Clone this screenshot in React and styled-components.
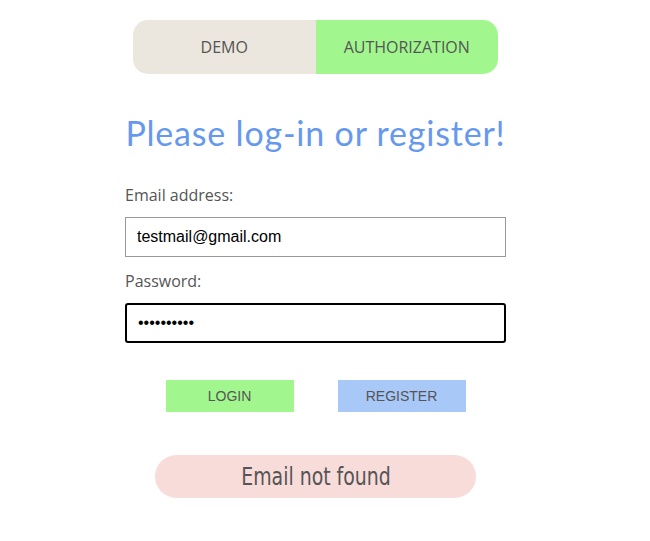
import React, { useState } from 'react';
import styled, { createGlobalStyle } from 'styled-components';

const GlobalStyle = createGlobalStyle`
  body {
    margin: 0;
    background: #fff;
    font-family: "Open Sans", "Noto Sans", sans-serif;
  }
`;

const Page = styled.div`
  width: 631px;
  display: flex;
  flex-direction: column;
  align-items: center;
  padding-top: 20px;
`;

const Tabs = styled.div`
  display: flex;
  width: 365px;
  height: 54px;
  border-radius: 15px;
  overflow: hidden;
`;

const Tab = styled.button`
  flex: 1;
  border: none;
  margin: 0;
  padding: 0;
  font-family: "Open Sans", "Noto Sans", sans-serif;
  font-size: 16px;
  color: #555;
  background: ${(p) => (p.active ? '#a1f78e' : '#ece7de')};
  cursor: pointer;
`;

const Title = styled.h1`
  margin: 38px 0 0;
  font-family: "Lato", sans-serif;
  font-weight: 400;
  font-size: 34px;
  color: #6699ee;
  letter-spacing: 0.8px;
`;

const Form = styled.form`
  width: 381px;
  margin-top: 31px;
  display: flex;
  flex-direction: column;
`;

const Label = styled.label`
  font-size: 16px;
  color: #555;
  margin-bottom: 11px;
  line-height: 22px;
`;

const Input = styled.input`
  box-sizing: border-box;
  width: 100%;
  height: 40px;
  padding: 0 11px;
  font-family: "Liberation Sans", Arial, sans-serif;
  font-size: 16px;
  color: #000;
  border: ${(p) => (p.focused ? '2px solid #000' : '1px solid #999')};
  border-radius: ${(p) => (p.focused ? '3px' : '0')};
  outline: none;
  margin-bottom: 13px;
`;

const Buttons = styled.div`
  display: flex;
  justify-content: center;
  gap: 44px;
  margin-top: 24px;
`;

const Action = styled.button`
  width: 128px;
  height: 32px;
  border: none;
  font-family: "Liberation Sans", Arial, sans-serif;
  font-size: 14px;
  color: #555;
  background: ${(p) => p.bg};
  cursor: pointer;
`;

const Alert = styled.div`
  width: 321px;
  height: 43px;
  margin-top: 43px;
  border-radius: 22px;
  background: #f8dcda;
  display: flex;
  align-items: center;
  justify-content: center;
  font-family: "DejaVu Sans Condensed", "DejaVu Sans", sans-serif;
  font-size: 25px;
  color: #555;
`;

const AlertText = styled.span`
  display: inline-block;
  transform: scaleX(0.84);
`;

export default function App() {
  const [tab, setTab] = useState('auth');
  const [email, setEmail] = useState('testmail@gmail.com');
  const [password, setPassword] = useState('1234567890');

  return (
    <Page>
      <GlobalStyle />
      <Tabs>
        <Tab active={tab === 'demo'} onClick={() => setTab('demo')}>DEMO</Tab>
        <Tab active={tab === 'auth'} onClick={() => setTab('auth')}>AUTHORIZATION</Tab>
      </Tabs>
      <Title>Please log-in or register!</Title>
      <Form onSubmit={(e) => e.preventDefault()}>
        <Label>Email address:</Label>
        <Input value={email} onChange={(e) => setEmail(e.target.value)} />
        <Label>Password:</Label>
        <Input
          type="password"
          focused
          value={password}
          onChange={(e) => setPassword(e.target.value)}
        />
        <Buttons>
          <Action bg="#a1f78e">LOGIN</Action>
          <Action bg="#a8c8f8">REGISTER</Action>
        </Buttons>
      </Form>
      <Alert>
        <AlertText>Email not found</AlertText>
      </Alert>
    </Page>
  );
}
